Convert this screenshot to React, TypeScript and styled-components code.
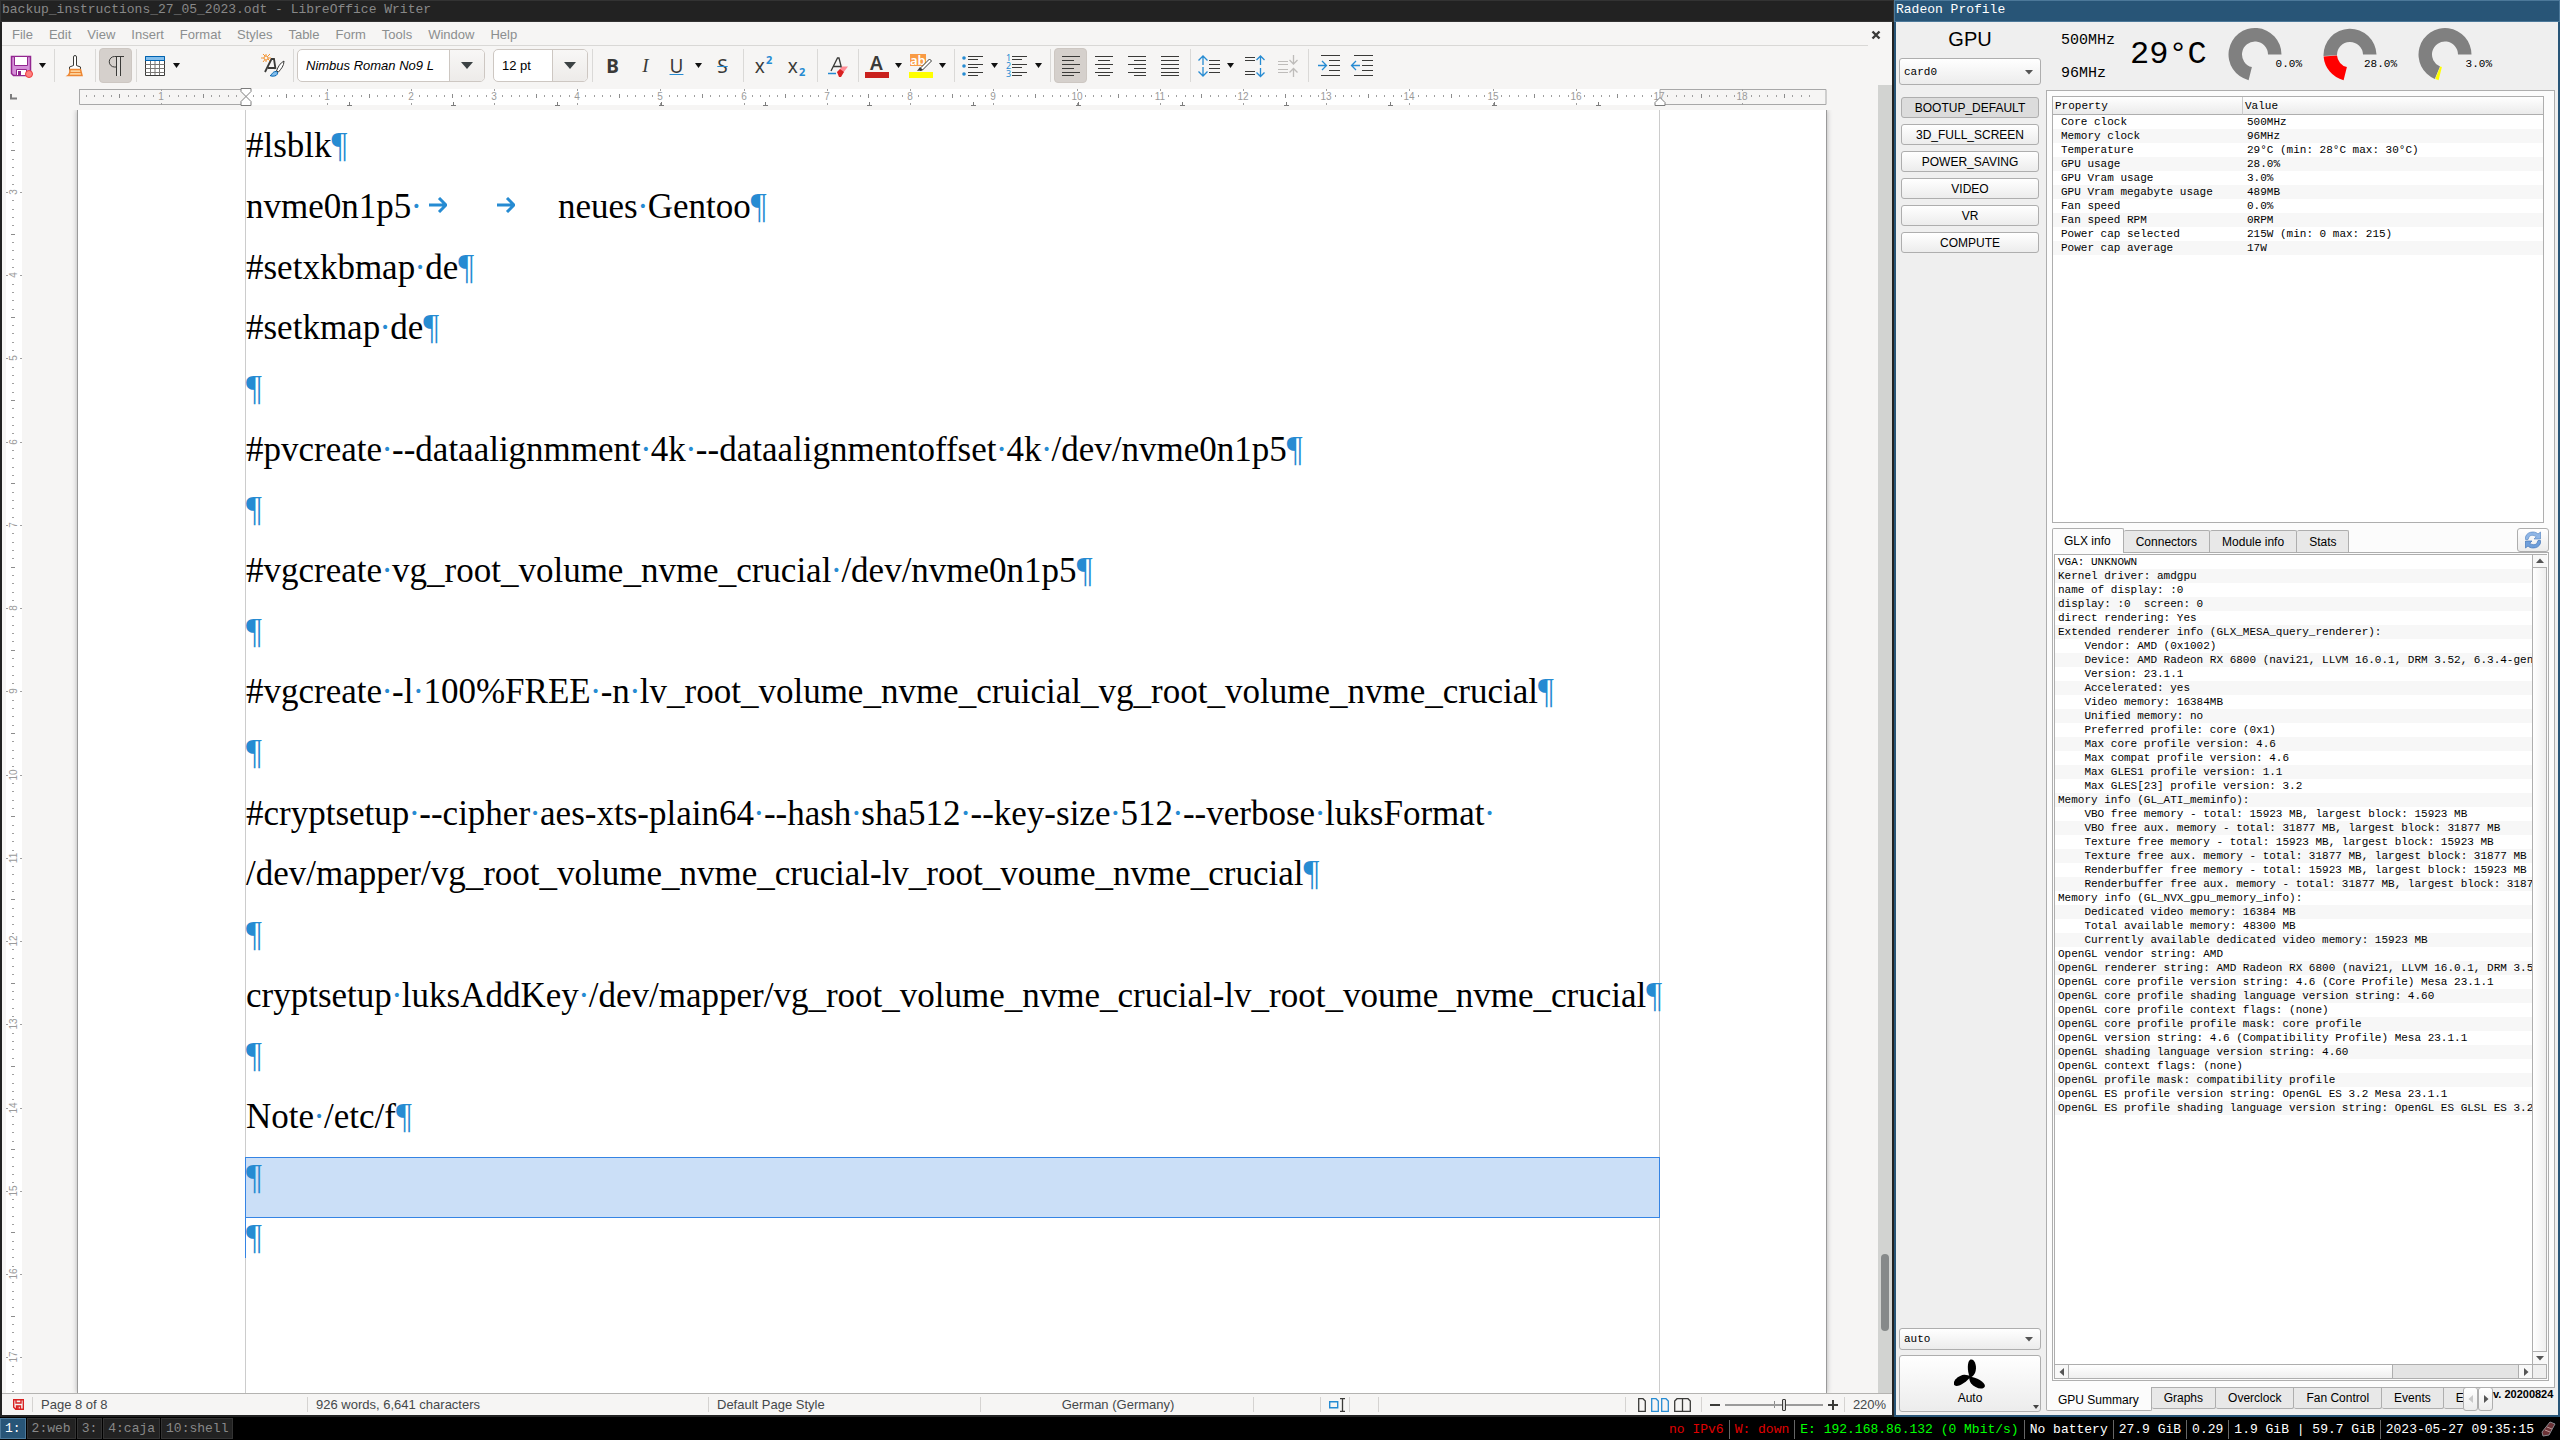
import React from 'react';
import styled, { createGlobalStyle, css } from 'styled-components';

const SANS = '"Liberation Sans", Arial, sans-serif';
const MONO = '"Liberation Mono", "Courier New", monospace';
const SERIF = '"Liberation Serif", "Times New Roman", serif';
const BLUE = '#268bd2';
const INK = '#3a3a38';

const GlobalStyle = createGlobalStyle`
  *, *::before, *::after { box-sizing: border-box; }
  body { margin: 0; background: #000; font-family: ${SANS}; overflow: hidden; }
  button, input, select { font: inherit; color: inherit; margin: 0; padding: 0; border: 0; background: none; }
  p, ul, h1 { margin: 0; padding: 0; }
`;

/* ---------- desktop ---------- */

const Desktop = styled.div`
  display: grid;
  grid-template-columns: minmax(0, 1fr) 666px;
  grid-template-rows: minmax(0, 1fr) 23px;
  height: 100vh;
`;

const Window = styled.section<{ $focused?: boolean }>`
  display: flex;
  flex-direction: column;
  min-width: 0;
  background: ${p => (p.$focused ? '#efefef' : '#f6f5f4')};
  border: solid ${p => (p.$focused ? '#285577' : '#222222')};
  border-width: 0 2px 2px;
`;

const TitleBar = styled.h1<{ $focused?: boolean }>`
  flex: none;
  height: 22px;
  margin: 0 -2px;
  padding: 0 2px;
  border: 1px solid ${p => (p.$focused ? '#4c7899' : '#333333')};
  background: ${p => (p.$focused ? '#285577' : '#222222')};
  color: ${p => (p.$focused ? '#ffffff' : '#888888')};
  font: 400 13px/18px ${MONO};
  padding-left: 1px;
  white-space: pre;
`;

/* ---------- writer: menu and toolbar ---------- */

const MenuRow = styled.nav`
  flex: none;
  display: flex;
  align-items: center;
  gap: 16px;
  height: 23px;
  padding: 2px 10px 0;
  font-size: 13px;
  line-height: 16px;
  color: #8b8e8f;
`;

const CloseDoc = styled.button`
  margin-left: auto;
  width: 12px;
  height: 12px;
  display: flex;
`;

const EditorBody = styled.div`
  flex: 1;
  min-height: 0;
  display: grid;
  grid-template-columns: minmax(0, 1fr) 14px;
  grid-template-rows: 40px minmax(0, 1fr);
`;

const Toolbar = styled.div`
  grid-column: 1 / 3;
  display: flex;
  align-items: center;
  height: 40px;
  margin-right: 24px;
  padding-left: 4px;
  border-top: 1px solid #d9d8d6;
`;

const Tool = styled.button<{ $on?: boolean; $narrow?: boolean }>`
  flex: none;
  display: flex;
  align-items: center;
  justify-content: center;
  width: ${p => (p.$narrow ? 29 : 33)}px;
  height: 35px;
  border-radius: 4px;
  ${p => p.$on && css`background: #d5d0cc; border: 1px solid #cdc7c2;`}
  svg { display: block; flex: none; overflow: visible; }
`;

const CaretButton = styled.button`
  flex: none;
  display: flex;
  align-items: center;
  justify-content: center;
  width: 15px;
  height: 35px;
`;

const ToolSep = styled.span`
  flex: none;
  width: 1px;
  height: 33px;
  margin: 0 3px 0 4px;
  background: #dad9d7;
`;

const Gap = styled.span<{ $w: number }>`
  flex: none;
  width: ${p => p.$w}px;
`;

const Combo = styled.div<{ $w: number }>`
  flex: none;
  display: flex;
  width: ${p => p.$w}px;
  height: 33px;
  border: 1px solid #cdc7c2;
  border-radius: 5px;
  background: #ffffff;
  overflow: hidden;
`;

const ComboInput = styled.input<{ $italic?: boolean }>`
  flex: 1;
  min-width: 0;
  padding: 0 8px;
  font-size: 13px;
  font-style: ${p => (p.$italic ? 'italic' : 'normal')};
  color: #000000;
`;

const ComboArrow = styled.button`
  width: 35px;
  display: flex;
  align-items: center;
  justify-content: center;
  border-left: 1px solid #cdc7c2;
  background: linear-gradient(#f8f7f6, #edebe9);
`;

const Caret = () => (
  <svg width="7" height="5" viewBox="0 0 7 5"><path d="M0 0h7L3.5 5z" fill="#111" /></svg>
);
const WideCaret = () => (
  <svg width="12" height="7" viewBox="0 0 12 7"><path d="M0 0h12L6 7z" fill="#3c4244" /></svg>
);

const Icon = ({ children }: { children: React.ReactNode }) => (
  <svg width="24" height="24" viewBox="0 0 24 24" fill="none" strokeWidth="1">{children}</svg>
);

const lines = (rows: [number, number, number][], color = INK) =>
  rows.map(([x1, x2, y]) => <path key={`${x1}-${y}`} d={`M${x1} ${y + 0.5}H${x2}`} stroke={color} />);

const SaveIcon = () => (
  <Icon>
    <path d="M2.5 2.5h19v19H4.500l-2-2z" fill="#d48fd8" stroke="#92278f" strokeWidth="1.500" />
    <path d="M5.500 2.500h13v9h-13z" fill="#fff" stroke="#92278f" />
    <path d="M7.500 15.500h10v6h-10z" fill="#fff" stroke="#92278f" />
    <path d="M9 17h3v4H9z" fill="#92278f" />
    <circle cx="20" cy="20" r="3.500" fill="#ff8080" stroke="#ed3d3b" />
  </Icon>
);
const BrushIcon = () => (
  <Icon>
    <path d="M10.500 11.500V3a1.500 1.500 0 0 1 3 0v8.500l4 1.500v3h-11v-3z" fill="#fff" stroke={INK} />
    <path d="M7 15.500h10.500l1.500 6H5c1.500-1 2-3 2-6z" fill="#fdd29b" stroke="#ed8733" strokeWidth="1.500" />
    <path d="M6 18.500h12" stroke="#ed8733" />
  </Icon>
);
const PilcrowIcon = () => (
  <Icon>
    <path d="M20 2.500H10.500a5 5 0 0 0 0 10.500H12.500M12.500 2.500v19.500M16.500 2.500v19.500" stroke={INK} />
    <path d="M13 3h3v19h-3z" fill="#fff" fillOpacity=".3" />
  </Icon>
);
const TableIcon = () => (
  <Icon>
    <path d="M2.500 2.500h19v19h-19z" fill="#fff" stroke={INK} />
    <path d="M2.500 10.500h19M2.500 14.500h19M2.500 18.500h19M7.500 6v15M12 6v15M16.500 6v15" stroke="#797774" />
    <path d="M2.500 2.500h19v4h-19z" fill="#83beec" stroke="#0063b1" />
  </Icon>
);
const StyleIcon = () => (
  <Icon>
    <path d="M4 18 10.500 5h2.500l1.500 10M7 14h7" stroke={INK} strokeWidth="1.800" />
    <path d="M5.500 3.500 2 0M5.500 3.500 9 7M5.500 3.500 2 8M5.500 3.500 9 0M5 0v8M0 4h10" stroke="#f39433" />
    <circle cx="5" cy="4" r="2" fill="#f6f5f4" stroke="#f39433" />
    <path d="M23 7c-4 2-6 6-7.500 10l2 1C20 15 23 12 23 7z" fill="#fff" stroke={INK} />
    <path d="M9 21.500c2 0 2-4 6-4 2.500 0 2 4-1.500 4.500-2 .3-3 .2-4.500-.5z" fill="#83beec" stroke="#0063b1" />
  </Icon>
);
const ClearIcon = () => (
  <Icon>
    <path d="M5 17 11.500 4h1.500l2.500 10M7.500 12.500h7" stroke={INK} strokeWidth="1.300" />
    <path d="M2 19.500h8" stroke={BLUE} strokeWidth="1.500" />
    <path d="M16 12.500h6l-5 6.500h-6z" fill="#ff8b94" />
    <path d="m11 18 3-3 4 3-3 5h-2z" fill="#d92121" />
  </Icon>
);

const Glyph = styled.span<{ $bold?: boolean; $italic?: boolean; $line?: 'underline' | 'line-through' }>`
  font-family: ${p => (p.$italic ? SERIF : '"Noto Sans", sans-serif')};
  font-size: 19px;
  line-height: 24px;
  color: ${INK};
  font-weight: ${p => (p.$bold ? 700 : 400)};
  font-style: ${p => (p.$italic ? 'italic' : 'normal')};
  text-decoration: ${p => p.$line || 'none'};
  text-decoration-color: ${BLUE};
  text-decoration-thickness: 1px;
`;

const ScriptMark = styled.span<{ $low?: boolean }>`
  align-self: ${p => (p.$low ? 'flex-end' : 'flex-start')};
  padding: 6px 0 5px 1px;
  font: 700 11px/12px "Noto Sans", sans-serif;
  color: ${BLUE};
`;

const ColorStack = styled.span<{ $bar: string }>`
  display: flex;
  justify-content: center;
  width: 24px;
  height: 24px;
  border-bottom: 6px solid ${p => p.$bar};
  font: 600 19px/18px "Noto Sans", sans-serif;
  color: ${INK};
`;

const HighlightIcon = () => (
  <svg width="24" height="18" viewBox="0 0 24 18">
    <path d="M1 0h16v12H1z" fill="#f99b45" />
    <text x="1" y="11" fontSize="13" fontFamily="Noto Sans, sans-serif" fill="#fff">ab</text>
    <path d="m20.500 5 2 2-9 9-2.500.500 1-3z" fill="#fff" stroke={INK} />
    <path d="m8 17 3-4 3 3z" fill={INK} />
  </svg>
);

const listLines = lines([[7, 22, 2], [7, 17, 5], [7, 22, 10], [7, 17, 13], [7, 22, 18], [7, 17, 21]]);
const BulletIcon = () => (
  <Icon>
    {listLines}
    {[4, 12, 20].map(y => <circle key={y} cx="3" cy={y} r="1.800" fill={BLUE} />)}
  </Icon>
);
const NumberIcon = () => (
  <Icon>
    {listLines}
    {[1, 2, 3].map(n => (
      <text key={n} x="1" y={n * 8 - 1} fontSize="9" fontFamily="Noto Sans, sans-serif" fill={BLUE}>{n}</text>
    ))}
  </Icon>
);
const ALIGN: Record<string, [number, number, number][]> = {
  left: [[3, 21, 2], [3, 15, 6], [3, 21, 10], [3, 15, 14], [3, 21, 18], [3, 15, 21]],
  center: [[3, 21, 2], [6, 18, 6], [3, 21, 10], [6, 18, 14], [3, 21, 18], [6, 18, 21]],
  right: [[3, 21, 2], [9, 21, 6], [3, 21, 10], [9, 21, 14], [3, 21, 18], [9, 21, 21]],
  justify: [[3, 21, 2], [3, 21, 6], [3, 21, 10], [3, 21, 14], [3, 21, 18], [3, 21, 21]],
};
const AlignIcon = ({ kind }: { kind: string }) => <Icon>{lines(ALIGN[kind])}</Icon>;
const LineSpaceIcon = () => (
  <Icon>
    {lines([[12, 23, 6], [12, 23, 10], [12, 23, 14], [12, 23, 18]])}
    <path d="M6 2v9M1.500 6.500 6 2l4.500 4.500M6 13v9M1.500 17.500 6 22l4.500-4.500" stroke={BLUE} strokeWidth="1.300" />
  </Icon>
);
const ParaIcon = ({ up, off }: { up?: boolean; off?: boolean }) => {
  const bar = off ? '#bebcba' : INK;
  const arrow = off ? '#bebcba' : BLUE;
  return (
    <Icon>
      {lines([[2, 12, up ? 3 : 7], [2, 12, up ? 6 : 10], [2, 12, up ? 17 : 15], [2, 12, up ? 20 : 18]], bar)}
      {up ? (
        <path d="M17.500 2v9M13.500 6l4-4 4 4M17.500 14v9M13.500 18.500l4 4 4-4" stroke={arrow} strokeWidth="1.300" />
      ) : (
        <path d="M17.500 1v9M13.500 6l4 4 4-4M17.500 14v9M13.500 18.500l4-4 4 4" stroke={arrow} strokeWidth="1.300" />
      )}
    </Icon>
  );
};
const IndentIcon = ({ out }: { out?: boolean }) => (
  <Icon>
    {lines([[4, 23, 1], [12, 23, 6], [12, 23, 11], [12, 23, 16], [4, 23, 21]])}
    {out ? (
      <path d="M10 11.500H1.500M6 7l-4.500 4.500L6 16" stroke={BLUE} strokeWidth="1.300" />
    ) : (
      <path d="M1 11.500h8.500M5 7l4.500 4.500L5 16" stroke={BLUE} strokeWidth="1.300" />
    )}
  </Icon>
);

const Split = ({ label, children }: { label: string; children: React.ReactNode }) => (
  <>
    <Tool $narrow aria-label={label}>{children}</Tool>
    <CaretButton aria-label={`${label} options`}><Caret /></CaretButton>
  </>
);

/* ---------- writer: rulers, page ---------- */

const UNIT = 83.23;
const TAB = 104;

const Workspace = styled.div`
  display: flex;
  flex-direction: column;
  min-width: 0;
`;

const RulerRow = styled.div`
  flex: none;
  display: flex;
  align-items: flex-start;
  height: 25px;
  padding: 2px 0 0 8px;
  svg { display: block; flex: none; }
`;

const Canvas = styled.div`
  flex: 1;
  min-height: 0;
  display: flex;
  padding-left: 4px;
  overflow: hidden;
`;

const VRulerBox = styled.div`
  flex: none;
  width: 16px;
  margin-right: 55px;
  background: #ffffff;
  overflow: hidden;
`;

const Page = styled.article`
  flex: none;
  width: 1750px;
  padding-left: 167px;
  background: #ffffff;
  border: solid #9a9a9a;
  border-width: 0 1px;
  box-shadow: 0 0 5px #b0b0b0;
`;

const TextArea = styled.div`
  width: 1415px;
  height: 100%;
  padding-top: 15px;
  border: solid #cccccc;
  border-width: 0 1px;
  font-family: ${SERIF};
  font-size: 35px;
  color: #000000;
`;

const Para = styled.p<{ $selected?: boolean; $caret?: boolean }>`
  height: 61px;
  line-height: 41px;
  white-space: pre;
  display: flex;
  &:nth-child(3n) { height: 60px; }
  ${p => p.$selected && css`
    && { height: 61px; margin: 0 -1px -1px; border: 1px solid #3584e4; background: #cbdff7; line-height: 39px; }
  `}
  ${p => p.$caret && css`
    && { height: 41px; margin-left: -1px; border-left: 1px solid #3584e4; }
  `}
`;

const Mark = styled.span`
  color: ${BLUE};
`;

const SpaceMark = styled(Mark)`
  display: inline-flex;
  justify-content: center;
  width: 10px;
`;

const TabCell = styled.span<{ $stops: number }>`
  display: flex;
  flex: none;
  width: ${p => p.$stops * TAB}px;
  height: 38px;
`;

const TabArrow = styled.span`
  flex: 1;
  display: flex;
  align-items: center;
  justify-content: center;
`;

const ArrowGlyph = () => (
  <TabArrow>
    <svg width="18" height="16" viewBox="0 0 18 16">
      <path d="M0 8h16M10 1l7 7-7 7" fill="none" stroke={BLUE} strokeWidth="3" />
    </svg>
  </TabArrow>
);

const Marked = ({ text }: { text: string }) => (
  <span>
    {text.split(/(·)/).map((part, i) => (part === '·' ? <SpaceMark key={i}>·</SpaceMark> : part))}
  </span>
);

const PARAS = [
  '#lsblk¶',
  'nvme0n1p5·\t\tneues·Gentoo¶',
  '#setxkbmap·de¶',
  '#setkmap·de¶',
  '¶',
  '#pvcreate·--dataalignmment·4k·--dataalignmentoffset·4k·/dev/nvme0n1p5¶',
  '¶',
  '#vgcreate·vg_root_volume_nvme_crucial·/dev/nvme0n1p5¶',
  '¶',
  '#vgcreate·-l·100%FREE·-n·lv_root_volume_nvme_cruicial_vg_root_volume_nvme_crucial¶',
  '¶',
  '#cryptsetup·--cipher·aes-xts-plain64·--hash·sha512·--key-size·512·--verbose·luksFormat·',
  '/dev/mapper/vg_root_volume_nvme_crucial-lv_root_voume_nvme_crucial¶',
  '¶',
  'cryptsetup·luksAddKey·/dev/mapper/vg_root_volume_nvme_crucial-lv_root_voume_nvme_crucial¶',
  '¶',
  'Note·/etc/f¶',
  '¶',
  '¶',
];

const Paragraph = ({ text, index }: { text: string; index: number }) => {
  const ends = text.endsWith('¶');
  const body = ends ? text.slice(0, -1) : text;
  const [lead, ...tabbed] = body.split('\t');
  return (
    <Para $selected={index === 17} $caret={index === 18}>
      {tabbed.length ? (
        <>
          <TabCell $stops={2}><Marked text={lead} /><ArrowGlyph /></TabCell>
          <TabCell $stops={1}><ArrowGlyph /></TabCell>
          <Marked text={tabbed[tabbed.length - 1]} />
        </>
      ) : body && <Marked text={body} />}
      {ends && <Mark>¶</Mark>}
    </Para>
  );
};

const HRuler = () => {
  const origin = 167;
  const zero = 165.2;
  const end = 1581;
  const ticks: React.ReactNode[] = [];
  for (let i = -19; i < 189; i++) {
    const x = Math.round(zero + (i * UNIT) / 10);
    if (i % 10 === 0) {
      if (i !== 0 && i !== 170) ticks.push(<path key={i} d={`M${x + 0.5} 2v2M${x + 0.5} 16v2`} stroke="#a0a0a0" />);
      if (i !== 0) ticks.push(<text key={`t${i}`} x={x} y="13" textAnchor="middle">{Math.abs(i / 10)}</text>);
    } else if (i % 5 === 0) ticks.push(<path key={i} d={`M${x + 0.5} 7v4`} stroke="#8c8c8c" />);
    else ticks.push(<path key={i} d={`M${x + 0.5} 8v2`} stroke="#a0a0a0" />);
  }
  const tabs = Array.from({ length: 13 }, (_, k) => Math.round(zero + 1 + (k + 1) * 1.25 * UNIT));
  return (
    <svg width="1760" height="20" viewBox="0 0 1760 20" fontFamily="Liberation Sans, sans-serif" fontSize="10" fill="#9a9a9a">
      <path d={`M${origin} 2H${end}V18H${origin}z`} fill="#fff" />
      <path d={`M.500 2.500H${origin}M.500 2v15.500H${origin}M${end} 2.500h166v15h-166z`} fill="none" stroke="#a8a8a8" />
      {ticks}
      {tabs.map(x => <path key={x} d={`M${x + 0.5} 15v3M${x - 2} 18.500h5`} stroke="#7c7c7c" />)}
      <path d={`M${origin - 5} 1.500h10v3l-5 5-5-5zM${origin} 9.500l5 5v4h-10v-4z`} fill="#fff" stroke="#7c7c7c" />
      <path d={`M${end} 10.500l5 5v3h-10v-3z`} fill="#fff" stroke="#7c7c7c" />
    </svg>
  );
};

const VRuler = () => {
  const ticks: React.ReactNode[] = [];
  for (let i = 21; i < 176; i++) {
    const y = Math.round(82 + ((i - 30) * UNIT) / 10);
    if (i % 10 === 0) {
      ticks.push(<path key={i} d={`M0 ${y + 0.5}h2M14 ${y + 0.5}h2`} stroke="#a0a0a0" />);
      ticks.push(<text key={`t${i}`} textAnchor="middle" transform={`translate(11 ${y}) rotate(-90)`}>{i / 10}</text>);
    } else if (i % 5 === 0) ticks.push(<path key={i} d={`M5 ${y + 0.5}h4`} stroke="#8c8c8c" />);
    else ticks.push(<path key={i} d={`M6 ${y + 0.5}h2`} stroke="#a0a0a0" />);
  }
  return (
    <svg width="16" height="1283" viewBox="0 0 16 1283" fontFamily="Liberation Sans, sans-serif" fontSize="10" fill="#9a9a9a">
      {ticks}
    </svg>
  );
};

const ScrollTrack = styled.div`
  display: flex;
  flex-direction: column;
  align-items: center;
  padding-bottom: 62px;
  background: #d2d3d1;
`;

const ScrollThumb = styled.span`
  margin-top: auto;
  width: 8px;
  height: 77px;
  border-radius: 4px;
  background: #86898a;
`;

/* ---------- writer: status bar ---------- */

const StatusBar = styled.footer`
  flex: none;
  display: flex;
  align-items: center;
  height: 22px;
  border-top: 1px solid #b4b3b1;
  font-size: 13px;
  line-height: 16px;
  color: #44484a;
`;

const StatusCell = styled.div<{ $w?: number; $center?: boolean }>`
  flex: ${p => (p.$w ? `0 0 ${p.$w}px` : '1 1 0')};
  min-width: 0;
  display: flex;
  align-items: center;
  justify-content: ${p => (p.$center ? 'center' : 'flex-start')};
  gap: 5px;
  height: 15px;
  padding: 0 6px 0 8px;
  border-right: 1px solid #d5d3d1;
  white-space: nowrap;
  &:last-child { border-right: 0; }
  svg { display: block; flex: none; }
`;

const ZoomButton = styled.button`
  flex: none;
  display: flex;
`;

const ZoomRange = styled.input`
  appearance: none;
  flex: 1;
  min-width: 0;
  height: 12px;
  background: linear-gradient(#8c8c8c, #8c8c8c) center / 1px 7px no-repeat;
  &::-webkit-slider-runnable-track { height: 2px; background: #9a9a9a; }
  &::-webkit-slider-thumb {
    appearance: none; width: 4px; height: 12px; margin-top: -5px;
    border: 1px solid ${INK}; border-radius: 1px; background: #d8d8d8;
  }
`;

const Sheet = ({ color = INK, wide = false }: { color?: string; wide?: boolean }) => (
  <svg width={wide ? 18 : 8} height="14" viewBox={wide ? '0 0 18 14' : '0 0 8 14'} fill="none" stroke={color} strokeWidth="1.300">
    <path d="M.700 .700h4.300l2.300 2.300v10.300H.700z" />
    {wide && <path d="M10.700 .700h4.300l2.300 2.300v10.300h-6.600z" />}
  </svg>
);

const Writer = () => (
  <Window>
    <TitleBar>backup_instructions_27_05_2023.odt - LibreOffice Writer</TitleBar>
    <MenuRow>
      {['File', 'Edit', 'View', 'Insert', 'Format', 'Styles', 'Table', 'Form', 'Tools', 'Window', 'Help'].map(m => (
        <button key={m}>{m}</button>
      ))}
      <CloseDoc aria-label="Close document">
        <svg width="12" height="12" viewBox="0 0 12 12"><path d="M2.500 2.500 9.500 9.500M9.500 2.500 2.500 9.500" stroke={INK} strokeWidth="2.400" /></svg>
      </CloseDoc>
    </MenuRow>
    <EditorBody>
      <Toolbar>
        <Split label="Save"><SaveIcon /></Split>
        <ToolSep />
        <Tool aria-label="Clone formatting"><BrushIcon /></Tool>
        <ToolSep />
        <Tool $on aria-label="Formatting marks"><PilcrowIcon /></Tool>
        <ToolSep />
        <Split label="Insert table"><TableIcon /></Split>
        <Gap $w={72} />
        <Tool aria-label="Update style"><StyleIcon /></Tool>
        <ToolSep />
        <Combo $w={188}>
          <ComboInput $italic aria-label="Font name" defaultValue="Nimbus Roman No9 L" />
          <ComboArrow aria-label="Choose font"><WideCaret /></ComboArrow>
        </Combo>
        <Gap $w={8} />
        <Combo $w={95}>
          <ComboInput aria-label="Font size" defaultValue="12 pt" />
          <ComboArrow aria-label="Choose size"><WideCaret /></ComboArrow>
        </Combo>
        <ToolSep />
        <Tool aria-label="Bold"><Glyph $bold>B</Glyph></Tool>
        <Tool aria-label="Italic"><Glyph $italic>I</Glyph></Tool>
        <Split label="Underline"><Glyph $line="underline">U</Glyph></Split>
        <Tool aria-label="Strikethrough"><Glyph $line="line-through">S</Glyph></Tool>
        <ToolSep />
        <Tool aria-label="Superscript"><Glyph>x</Glyph><ScriptMark>2</ScriptMark></Tool>
        <Tool aria-label="Subscript"><Glyph>x</Glyph><ScriptMark $low>2</ScriptMark></Tool>
        <ToolSep />
        <Tool aria-label="Clear formatting"><ClearIcon /></Tool>
        <ToolSep />
        <Split label="Font color"><ColorStack $bar="#c9211e">A</ColorStack></Split>
        <Split label="Highlighting"><ColorStack $bar="#ffff00"><HighlightIcon /></ColorStack></Split>
        <ToolSep />
        <Split label="Bullets"><BulletIcon /></Split>
        <Split label="Numbering"><NumberIcon /></Split>
        <ToolSep />
        <Tool $on aria-label="Align left"><AlignIcon kind="left" /></Tool>
        <Tool aria-label="Center"><AlignIcon kind="center" /></Tool>
        <Tool aria-label="Align right"><AlignIcon kind="right" /></Tool>
        <Tool aria-label="Justify"><AlignIcon kind="justify" /></Tool>
        <ToolSep />
        <Split label="Line spacing"><LineSpaceIcon /></Split>
        <Tool aria-label="Increase paragraph spacing"><ParaIcon up /></Tool>
        <Tool aria-label="Decrease paragraph spacing" disabled><ParaIcon off /></Tool>
        <ToolSep />
        <Tool aria-label="Increase indent"><IndentIcon /></Tool>
        <Tool aria-label="Decrease indent"><IndentIcon out /></Tool>
      </Toolbar>
      <Workspace>
        <RulerRow>
          <svg width="69" height="20" viewBox="0 0 69 20"><path d="M1 7v4.500h6" fill="none" stroke="#7c7c7c" strokeWidth="2" /></svg>
          <HRuler />
        </RulerRow>
        <Canvas>
          <VRulerBox><VRuler /></VRulerBox>
          <Page>
            <TextArea>
              {PARAS.map((text, i) => <Paragraph key={i} text={text} index={i} />)}
            </TextArea>
          </Page>
        </Canvas>
      </Workspace>
      <ScrollTrack><ScrollThumb /></ScrollTrack>
    </EditorBody>
    <StatusBar>
      <StatusCell $w={31} $center>
        <svg width="11" height="11" viewBox="0 0 11 11" fill="none" stroke="#d92121" strokeWidth="1.400">
          <path d="M.700 .700h9.600v9.600H2.700l-2-2zM3 .700v3.300h5V.700M3.500 10V7h4v3M5 7.500v2" />
        </svg>
      </StatusCell>
      <StatusCell $w={275}>Page 8 of 8</StatusCell>
      <StatusCell $w={401}>926 words, 6,641 characters</StatusCell>
      <StatusCell $w={272}>Default Page Style</StatusCell>
      <StatusCell $w={273} $center>German (Germany)</StatusCell>
      <StatusCell $w={67} />
      <StatusCell $w={29}>
        <svg width="17" height="14" viewBox="0 0 17 14" fill="none">
          <path d="M.700 3.700h8v6h-8z" stroke={BLUE} strokeWidth="1.400" />
          <path d="M13.500 1v12M11 .700h5M11 13.300h5" stroke={INK} strokeWidth="1.300" />
        </svg>
      </StatusCell>
      <StatusCell $w={29} />
      <StatusCell />
      <StatusCell $w={76} $center>
        <Sheet />
        <Sheet wide color={BLUE} />
        <svg width="17" height="14" viewBox="0 0 17 14" fill="none" stroke={INK} strokeWidth="1.300">
          <path d="M8.500 13.300H.700V3L3 .700h11L16.300 3v10.300zM8.500 .700v12.600" />
        </svg>
      </StatusCell>
      <StatusCell $w={143}>
        <ZoomButton aria-label="Zoom out"><svg width="10" height="10" viewBox="0 0 10 10"><path d="M0 5h10" stroke={INK} strokeWidth="2" /></svg></ZoomButton>
        <ZoomRange type="range" aria-label="Zoom" defaultValue={61} />
        <ZoomButton aria-label="Zoom in"><svg width="10" height="10" viewBox="0 0 10 10"><path d="M0 5h10M5 0v10" stroke={INK} strokeWidth="2" /></svg></ZoomButton>
      </StatusCell>
      <StatusCell $w={47} $center>220%</StatusCell>
    </StatusBar>
  </Window>
);

/* ---------- radeon profile ---------- */

const EDGE = '#aeaeae';

const RadeonBody = styled.div`
  flex: 1;
  min-height: 0;
  display: grid;
  grid-template-columns: 142px minmax(0, 1fr);
  gap: 5px;
  padding: 0 3px;
  font-size: 12px;
  color: #000000;
`;

const Side = styled.div`
  display: flex;
  flex-direction: column;
  padding-bottom: 3px;
`;

const SideTitle = styled.div`
  height: 36px;
  font-size: 20px;
  line-height: 35px;
  text-align: center;
`;

const raised = css`
  border: 1px solid ${EDGE};
  border-radius: 3px;
  background: linear-gradient(#ffffff, #ececec);
`;

const SelectBox = styled.div<{ $h: number }>`
  ${raised}
  flex: none;
  display: flex;
  align-items: center;
  height: ${p => p.$h}px;
  padding: 0 7px 0 4px;
  select {
    appearance: none;
    flex: 1;
    min-width: 0;
    height: 16px;
    outline: 0;
    font: 11px/14px ${MONO};
  }
`;

const Profiles = styled.div`
  display: flex;
  flex-direction: column;
  gap: 6px;
  margin: 12px 2px auto;
`;

const ProfileButton = styled.button<{ $on?: boolean }>`
  ${raised}
  height: 21px;
  padding-top: 1px;
  line-height: 18px;
  text-align: center;
  ${p => p.$on && css`background: #dcdcdc;`}
`;

const FanButton = styled.button`
  ${raised}
  display: flex;
  flex-direction: column;
  align-items: center;
  position: relative;
  height: 57px;
  margin-top: 5px;
  padding-top: 2px;
  line-height: 16px;
`;

const CornerMark = styled.svg`
  position: absolute;
  right: 1px;
  bottom: 2px;
`;

const Main = styled.div`
  display: flex;
  flex-direction: column;
  min-width: 0;
  padding-bottom: 4px;
`;

const Metrics = styled.div`
  flex: none;
  display: flex;
  align-items: center;
  height: 68px;
  padding-left: 15px;
  font-family: ${MONO};
`;

const Clocks = styled.div`
  align-self: flex-end;
  width: 54px;
  font-size: 15px;
  line-height: 33px;
`;

const Temp = styled.div`
  padding: 0 21px 2px 15px;
  font-size: 32px;
  line-height: 36px;
`;

const Gauges = styled.div`
  display: flex;
  gap: 15px;
`;

const Pane = styled.div`
  flex: 1;
  min-height: 0;
  display: flex;
  flex-direction: column;
  padding: 5px 5px 6px;
  border: 1px solid ${EDGE};
  background: #fcfcfc;
`;

const TableFrame = styled.div`
  flex: none;
  height: 427px;
  margin-right: 5px;
  border: 1px solid ${EDGE};
  background: #ffffff;
`;

const PropTable = styled.table`
  width: 100%;
  border-collapse: separate;
  border-spacing: 0;
  table-layout: fixed;
  font: 11px/14px ${MONO};
  text-align: left;
  th {
    height: 18px;
    padding: 0 2px;
    border-bottom: 1px solid ${EDGE};
    font-weight: 400;
    background: linear-gradient(#ffffff, #ebebeb);
  }
  th:first-child { width: 190px; border-right: 1px solid #cccccc; }
  td { height: 14px; padding: 0 4px; white-space: pre; }
  td:first-child { padding-left: 8px; }
  tbody tr:nth-child(even) td { background: #f7f7f7; }
`;

const TabRow = styled.div`
  flex: none;
  display: flex;
  align-items: flex-end;
  height: 25px;
  margin: 5px 0 -1px;
`;

const Tab = styled.button<{ $on?: boolean }>`
  flex: none;
  height: ${p => (p.$on ? 25 : 22)}px;
  margin-bottom: ${p => (p.$on ? 0 : 1)}px;
  padding: 0 12px 0 ${p => (p.$on ? 11 : 12)}px;
  border: 1px solid ${EDGE};
  border-width: 1px 1px 0 ${p => (p.$on ? 1 : 0)}px;
  border-radius: 2px 2px 0 0;
  background: ${p => (p.$on ? '#fcfcfc' : '#e8e8e8')};
  line-height: 20px;
  z-index: ${p => (p.$on ? 1 : 0)};
`;

const RefreshButton = styled.button`
  ${raised}
  display: flex;
  align-items: center;
  justify-content: center;
  width: 32px;
  height: 24px;
  margin: 0 0 1px auto;
`;

const InfoPane = styled.div`
  flex: 1;
  min-height: 0;
  display: flex;
  padding: 1px;
  border: 1px solid ${EDGE};
`;

const InfoFrame = styled.div`
  flex: 1;
  min-width: 0;
  display: grid;
  grid-template-columns: minmax(0, 1fr) 14px;
  grid-template-rows: minmax(0, 1fr) 14px;
  border: 1px solid ${EDGE};
  background: #ffffff;
`;

const InfoList = styled.ul`
  overflow: hidden;
  list-style: none;
  font: 11px/14px ${MONO};
  li { height: 14px; padding-left: 3px; white-space: pre; }
  li:nth-child(even) { background: #f7f7f7; }
`;

const BarV = styled.div`
  display: flex;
  flex-direction: column;
  justify-content: space-between;
  border-left: 1px solid ${EDGE};
  background: linear-gradient(90deg, #ffffff, #efefef);
`;

const BarH = styled.div`
  display: flex;
  border-top: 1px solid ${EDGE};
  background: #e4e4e4;
`;

const HHandle = styled.span`
  flex: 0 0 68%;
  border-right: 1px solid ${EDGE};
  background: linear-gradient(#ffffff, #efefef);
`;

const Corner = styled.span`
  border: solid ${EDGE};
  border-width: 1px 0 0 1px;
  background: #efefef;
`;

const Stepper = styled.button<{ $side: 'top' | 'bottom' | 'left' | 'right' }>`
  flex: none;
  display: flex;
  align-items: center;
  justify-content: center;
  width: 14px;
  height: 13px;
  background: #f8f8f8;
  border: 0 solid ${EDGE};
  border-${p => p.$side}-width: 1px;
  ${p => (p.$side === 'left') && css`margin-left: auto;`}
`;

const Triangle = ({ turn, color = '#555' }: { turn: number; color?: string }) => (
  <svg width="8" height="8" viewBox="0 0 8 8"><path d="M0 2h8L4 6.500z" fill={color} transform={`rotate(${turn} 4 4)`} /></svg>
);

const BottomRow = styled.div`
  flex: none;
  display: flex;
  align-items: flex-start;
  height: 24px;
  margin-top: -1px;
`;

const BottomTabs = styled.div`
  flex: 1;
  min-width: 0;
  display: flex;
  overflow: hidden;
`;

const BottomTab = styled.button<{ $on?: boolean }>`
  flex: none;
  height: ${p => (p.$on ? 24 : 22)}px;
  padding: ${p => (p.$on ? '2px 12px 0 11px' : '0 12px')};
  border: 1px solid ${EDGE};
  border-width: ${p => (p.$on ? '0 1px 1px' : '1px 1px 1px 0')};
  border-radius: 0 0 2px 2px;
  background: ${p => (p.$on ? '#fcfcfc' : '#e8e8e8')};
  line-height: 20px;
`;

const PageStep = styled.button`
  ${raised}
  flex: none;
  display: flex;
  align-items: center;
  justify-content: center;
  width: 15px;
  height: 24px;
`;

const Version = styled.span`
  flex: none;
  width: 62px;
  font-size: 11px;
  line-height: 15px;
  font-weight: 700;
  white-space: nowrap;
`;

const point = (r: number, deg: number) => {
  const a = (deg * Math.PI) / 180;
  return `${(27 + r * Math.cos(a)).toFixed(1)} ${(27.5 - r * Math.sin(a)).toFixed(1)}`;
};
const ring = (from: number, to: number) => {
  const big = to - from > 180 ? 1 : 0;
  return `M${point(26.5, from)}A26.500 26.500 0 ${big} 0 ${point(26.5, to)}L${point(13, to)}A13 13 0 ${big} 1 ${point(13, from)}z`;
};

const Gauge = ({ value, color }: { value: number; color: string }) => {
  const stop = 256;
  const start = stop - (value / 100) * stop;
  return (
    <svg width="80" height="58" viewBox="0 0 80 58">
      <path d={ring(0, value ? start - 1 : stop)} fill="#808080" />
      {value > 0 && <path d={ring(start, stop)} fill={color} />}
      <text x="74" y="40" textAnchor="end" fontSize="11" fontFamily="Liberation Mono, monospace">{value.toFixed(1)}%</text>
    </svg>
  );
};

const PROPS = [
  ['Core clock', '500MHz'],
  ['Memory clock', '96MHz'],
  ['Temperature', '29°C (min: 28°C max: 30°C)'],
  ['GPU usage', '28.0%'],
  ['GPU Vram usage', '3.0%'],
  ['GPU Vram megabyte usage', '489MB'],
  ['Fan speed', '0.0%'],
  ['Fan speed RPM', '0RPM'],
  ['Power cap selected', '215W (min: 0 max: 215)'],
  ['Power cap average', '17W'],
];

const INFO = `VGA: UNKNOWN
Kernel driver: amdgpu
name of display: :0
display: :0  screen: 0
direct rendering: Yes
Extended renderer info (GLX_MESA_query_renderer):
    Vendor: AMD (0x1002)
    Device: AMD Radeon RX 6800 (navi21, LLVM 16.0.1, DRM 3.52, 6.3.4-gen
    Version: 23.1.1
    Accelerated: yes
    Video memory: 16384MB
    Unified memory: no
    Preferred profile: core (0x1)
    Max core profile version: 4.6
    Max compat profile version: 4.6
    Max GLES1 profile version: 1.1
    Max GLES[23] profile version: 3.2
Memory info (GL_ATI_meminfo):
    VBO free memory - total: 15923 MB, largest block: 15923 MB
    VBO free aux. memory - total: 31877 MB, largest block: 31877 MB
    Texture free memory - total: 15923 MB, largest block: 15923 MB
    Texture free aux. memory - total: 31877 MB, largest block: 31877 MB
    Renderbuffer free memory - total: 15923 MB, largest block: 15923 MB
    Renderbuffer free aux. memory - total: 31877 MB, largest block: 3187
Memory info (GL_NVX_gpu_memory_info):
    Dedicated video memory: 16384 MB
    Total available memory: 48300 MB
    Currently available dedicated video memory: 15923 MB
OpenGL vendor string: AMD
OpenGL renderer string: AMD Radeon RX 6800 (navi21, LLVM 16.0.1, DRM 3.5
OpenGL core profile version string: 4.6 (Core Profile) Mesa 23.1.1
OpenGL core profile shading language version string: 4.60
OpenGL core profile context flags: (none)
OpenGL core profile profile mask: core profile
OpenGL version string: 4.6 (Compatibility Profile) Mesa 23.1.1
OpenGL shading language version string: 4.60
OpenGL context flags: (none)
OpenGL profile mask: compatibility profile
OpenGL ES profile version string: OpenGL ES 3.2 Mesa 23.1.1
OpenGL ES profile shading language version string: OpenGL ES GLSL ES 3.2`.split('\n');

const FanIcon = () => (
  <svg width="32" height="32" viewBox="0 0 32 32">
    {[0, 120, 240].map(r => (
      <path key={r} d="M16 20C13 13 13 3 16.500 1.500 21 .500 23.500 9 21 15c-1 2-3 4-5 5z" transform={`rotate(${r} 16 19)`} />
    ))}
  </svg>
);

const RefreshIcon = () => (
  <svg width="18" height="18" viewBox="0 0 18 18">
    <path d="M1.500 8.500V6C2.500 2.500 5.500 1 9 1c2.500 0 4 1 5 2l2.500-2v7H10l2.200-2.200C9.500 3.500 6 4 5 6l-1 2.500z" fill="#8fb6e6" stroke="#5a8ac6" strokeWidth=".700" />
    <path d="M16.500 9.500V12c-1 3.500-4 5-7.500 5-2.500 0-4-1-5-2l-2.500 2v-7H8l-2.200 2.200C8.500 14.500 12 14 13 12l1-2.500z" fill="#6f9fdb" stroke="#4577b8" strokeWidth=".700" />
  </svg>
);

const Radeon = () => (
  <Window $focused>
    <TitleBar $focused>Radeon Profile</TitleBar>
    <RadeonBody>
      <Side>
        <SideTitle>GPU</SideTitle>
        <SelectBox $h={27}>
          <select aria-label="Card"><option>card0</option></select>
          <Triangle turn={0} />
        </SelectBox>
        <Profiles>
          {['BOOTUP_DEFAULT', '3D_FULL_SCREEN', 'POWER_SAVING', 'VIDEO', 'VR', 'COMPUTE'].map((name, i) => (
            <ProfileButton key={name} $on={i === 0}>{name}</ProfileButton>
          ))}
        </Profiles>
        <SelectBox $h={22}>
          <select aria-label="Power level"><option>auto</option></select>
          <Triangle turn={0} />
        </SelectBox>
        <FanButton>
          <FanIcon />
          Auto
          <CornerMark width="6" height="4" viewBox="0 0 6 4"><path d="M0 0h6L3 4z" fill="#444" /></CornerMark>
        </FanButton>
      </Side>
      <Main>
        <Metrics>
          <Clocks>
            <div>500MHz</div>
            <div>96MHz</div>
          </Clocks>
          <Temp>29°C</Temp>
          <Gauges>
            <Gauge value={0} color="#00ff00" />
            <Gauge value={28} color="#ff0000" />
            <Gauge value={3} color="#ffff00" />
          </Gauges>
        </Metrics>
        <Pane>
          <TableFrame>
            <PropTable>
              <thead><tr><th>Property</th><th>Value</th></tr></thead>
              <tbody>
                {PROPS.map(([k, v]) => <tr key={k}><td>{k}</td><td>{v}</td></tr>)}
              </tbody>
            </PropTable>
          </TableFrame>
          <TabRow>
            <Tab $on>GLX info</Tab>
            <Tab>Connectors</Tab>
            <Tab>Module info</Tab>
            <Tab>Stats</Tab>
            <RefreshButton aria-label="Refresh"><RefreshIcon /></RefreshButton>
          </TabRow>
          <InfoPane>
            <InfoFrame>
              <InfoList>{INFO.map((line, i) => <li key={i}>{line}</li>)}</InfoList>
              <BarV>
                <Stepper $side="bottom" aria-label="Scroll up"><Triangle turn={180} /></Stepper>
                <Stepper $side="top" aria-label="Scroll down"><Triangle turn={0} /></Stepper>
              </BarV>
              <BarH>
                <Stepper $side="right" aria-label="Scroll left"><Triangle turn={90} /></Stepper>
                <HHandle />
                <Stepper $side="left" aria-label="Scroll right"><Triangle turn={270} /></Stepper>
              </BarH>
              <Corner />
            </InfoFrame>
          </InfoPane>
        </Pane>
        <BottomRow>
          <BottomTabs>
            <BottomTab $on>GPU Summary</BottomTab>
            <BottomTab>Graphs</BottomTab>
            <BottomTab>Overclock</BottomTab>
            <BottomTab>Fan Control</BottomTab>
            <BottomTab>Events</BottomTab>
            <BottomTab>E</BottomTab>
          </BottomTabs>
          <PageStep aria-label="Previous tabs"><Triangle turn={90} color="#c8c8c8" /></PageStep>
          <PageStep aria-label="Next tabs"><Triangle turn={270} /></PageStep>
          <Version>v. 20200824</Version>
        </BottomRow>
      </Main>
    </RadeonBody>
  </Window>
);

/* ---------- bottom bar ---------- */

const Bar = styled.footer`
  grid-column: 1 / 3;
  display: flex;
  justify-content: space-between;
  padding-top: 1px;
  background: #000000;
  font: 13px/19px ${MONO};
  white-space: pre;
`;

const Workspaces = styled.nav`
  display: flex;
  gap: 1px;
`;

const Space = styled.button<{ $on?: boolean }>`
  height: 21px;
  padding: 0 4px;
  border: 1px solid ${p => (p.$on ? '#4c7899' : '#333333')};
  background: ${p => (p.$on ? '#285577' : '#222222')};
  color: ${p => (p.$on ? '#ffffff' : '#888888')};
`;

const Blocks = styled.div`
  display: flex;
  align-items: center;
  padding-right: 1px;
`;

const Block = styled.span<{ $color?: string }>`
  padding: 0 5px;
  border-left: 1px solid #666666;
  color: ${p => p.$color || '#ffffff'};
  &:first-child { border-left: 0; }
`;

const App = () => (
  <>
    <GlobalStyle />
    <Desktop>
      <Writer />
      <Radeon />
      <Bar>
        <Workspaces>
          {['1:', '2:web', '3:', '4:caja', '10:shell'].map((w, i) => <Space key={w} $on={i === 0}>{w}</Space>)}
        </Workspaces>
        <Blocks>
          <Block $color="#e00000">no IPv6</Block>
          <Block $color="#e00000">W: down</Block>
          <Block $color="#00ff00">E: 192.168.86.132 (0 Mbit/s)</Block>
          <Block>No battery</Block>
          <Block>27.9 GiB</Block>
          <Block>0.29</Block>
          <Block>1.9 GiB | 59.7 GiB</Block>
          <Block>2023-05-27 09:35:15</Block>
          <svg width="20" height="18" viewBox="0 0 20 18">
            <path d="M3 12 11 2l5 2-6 11-6 1z" fill="#6b3236" stroke="#8a8a90" />
            <path d="m8 7 5 2M6 10l5 2" stroke="#b99" />
          </svg>
        </Blocks>
      </Bar>
    </Desktop>
  </>
);

export default App;
